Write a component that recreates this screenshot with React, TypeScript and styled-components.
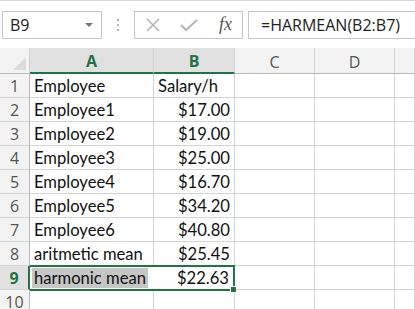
import React from "react";
import styled, { createGlobalStyle } from "styled-components";

const GlobalStyle = createGlobalStyle`
  html, body {
    margin: 0;
    padding: 0;
    background: #ffffff;
    overflow: hidden;
  }
  body {
    font-family: "Lato", "Open Sans", sans-serif;
  }
`;

const Page = styled.div`
  width: 415px;
  height: 309px;
  overflow: hidden;
  border-top: 1px solid #d9d9d9;
  box-sizing: border-box;
`;

const Toolbar = styled.div`
  display: flex;
  align-items: center;
  height: 47px;
  padding-left: 2px;
`;

const NameBox = styled.div`
  width: 100px;
  height: 28px;
  border: 1px solid #c6c6c6;
  display: flex;
  align-items: center;
  justify-content: space-between;
  padding: 0 8px 0 7px;
  box-sizing: border-box;
  font-family: "Open Sans", sans-serif;
  font-size: 16px;
  color: #222;
`;

const Arrow = styled.span`
  width: 0;
  height: 0;
  border-left: 4px solid transparent;
  border-right: 4px solid transparent;
  border-top: 4px solid #777;
`;

const Dots = styled.div`
  width: 32px;
  display: flex;
  flex-direction: column;
  align-items: center;
  gap: 3px;
`;

const Dot = styled.span`
  width: 2px;
  height: 2px;
  background: #b0b0b0;
`;

const FxBox = styled.div`
  width: 109px;
  height: 28px;
  border: 1px solid #c6c6c6;
  box-sizing: border-box;
  display: flex;
  align-items: center;
  padding: 0 8px 0 10px;
  gap: 19px;
`;

const Fx = styled.span`
  font-family: "Liberation Serif", serif;
  font-style: italic;
  font-size: 18px;
  color: #555;
  margin-left: 2px;
`;

const FormulaBox = styled.div`
  flex: 1;
  margin-left: 5px;
  height: 28px;
  border: 1px solid #c6c6c6;
  border-right: none;
  box-sizing: border-box;
  display: flex;
  align-items: center;
  padding-left: 12px;
  font-family: "Open Sans", sans-serif;
  font-size: 16px;
  color: #222;
`;

const Sheet = styled.div`
  display: grid;
  grid-template-columns: 30px 124px 81px 80px 80px 20px;
  grid-template-rows: 26px repeat(10, 24px);
`;

const Corner = styled.div`
  background: #f3f3f3;
  border-right: 1px solid #d4d4d4;
  border-bottom: 1px solid #b9b9b9;
  position: relative;
  &::after {
    content: "";
    position: absolute;
    right: 3px;
    bottom: 3px;
    border-left: 13px solid transparent;
    border-bottom: 13px solid #dcdcdc;
  }
`;

const ColHead = styled.div<{ $sel?: boolean }>`
  background: ${(p) => (p.$sel ? "#e1e1e1" : "#f3f3f3")};
  border-right: 1px solid #d4d4d4;
  border-bottom: ${(p) => (p.$sel ? "2px solid #217346" : "1px solid #b9b9b9")};
  display: flex;
  align-items: center;
  justify-content: center;
  font-family: "Open Sans", sans-serif;
  font-size: 16px;
  font-weight: ${(p) => (p.$sel ? 700 : 400)};
  color: ${(p) => (p.$sel ? "#217346" : "#555")};
  padding-top: 2px;
  box-sizing: border-box;
`;

const RowHead = styled.div<{ $sel?: boolean }>`
  background: ${(p) => (p.$sel ? "#e1e1e1" : "#f3f3f3")};
  border-right: ${(p) => (p.$sel ? "2px solid #217346" : "1px solid #b9b9b9")};
  border-bottom: 1px solid #d4d4d4;
  display: flex;
  align-items: center;
  justify-content: center;
  font-family: "Open Sans", sans-serif;
  font-size: 16px;
  font-weight: ${(p) => (p.$sel ? 700 : 400)};
  color: ${(p) => (p.$sel ? "#217346" : "#555")};
  box-sizing: border-box;
`;

const Cell = styled.div<{ $right?: boolean }>`
  border-right: 1px solid #d4d4d4;
  border-bottom: 1px solid #d4d4d4;
  display: flex;
  align-items: center;
  justify-content: ${(p) => (p.$right ? "flex-end" : "flex-start")};
  padding: 0 4px;
  box-sizing: border-box;
  font-size: 16.6px;
  color: #111;
  white-space: nowrap;
`;

const SelCell = styled(Cell)<{ $edge: "left" | "right" }>`
  border-top: 2px solid #217346;
  border-bottom: 2px solid #217346;
  border-right: ${(p) => (p.$edge === "right" ? "2px solid #217346" : "none")};
  margin-top: -1px;
  height: 26px;
  position: relative;
  padding: ${(p) => (p.$edge === "left" ? "0 0 0 2px" : "0 4px")};
`;

const Shade = styled.span`
  background: #c6c6c6;
  align-self: stretch;
  margin: 1px 6px 1px 0;
  flex: 1;
  display: flex;
  align-items: center;
  padding-left: 2px;
`;

const Handle = styled.span`
  position: absolute;
  right: -4px;
  bottom: -4px;
  width: 5px;
  height: 5px;
  background: #217346;
  border: 1px solid #fff;
`;

const rows: [string, string][] = [
  ["Employee", "Salary/h"],
  ["Employee1", "$17.00"],
  ["Employee2", "$19.00"],
  ["Employee3", "$25.00"],
  ["Employee4", "$16.70"],
  ["Employee5", "$34.20"],
  ["Employee6", "$40.80"],
  ["aritmetic mean", "$25.45"],
];

const XIcon = () => (
  <svg width="16" height="16" viewBox="0 0 16 16">
    <path d="M2 2 L14 14 M14 2 L2 14" stroke="#b5b5b5" strokeWidth="1.6" fill="none" />
  </svg>
);

const CheckIcon = () => (
  <svg width="18" height="16" viewBox="0 0 18 16">
    <path d="M1 8 L6 13 L17 3" stroke="#b5b5b5" strokeWidth="2" fill="none" />
  </svg>
);

const Blank = ({ n }: { n: number }) => (
  <>
    <RowHead>{n}</RowHead>
    <Cell />
    <Cell />
    <Cell />
    <Cell />
    <Cell />
  </>
);

export default function App() {
  return (
    <Page>
      <GlobalStyle />
      <Toolbar>
        <NameBox>
          B9
          <Arrow />
        </NameBox>
        <Dots>
          <Dot />
          <Dot />
          <Dot />
        </Dots>
        <FxBox>
          <XIcon />
          <CheckIcon />
          <Fx>fx</Fx>
        </FxBox>
        <FormulaBox>=HARMEAN(B2:B7)</FormulaBox>
      </Toolbar>
      <Sheet>
        <Corner />
        <ColHead $sel>A</ColHead>
        <ColHead $sel>B</ColHead>
        <ColHead>C</ColHead>
        <ColHead>D</ColHead>
        <ColHead />
        {rows.map(([a, b], i) => (
          <React.Fragment key={i}>
            <RowHead>{i + 1}</RowHead>
            <Cell>{a}</Cell>
            <Cell $right={i > 0}>{b}</Cell>
            <Cell />
            <Cell />
            <Cell />
          </React.Fragment>
        ))}
        <RowHead $sel>9</RowHead>
        <SelCell $edge="left">
          <Shade>harmonic mean</Shade>
        </SelCell>
        <SelCell $edge="right" $right>
          $22.63
          <Handle />
        </SelCell>
        <Cell />
        <Cell />
        <Cell />
        <Blank n={10} />
      </Sheet>
    </Page>
  );
}
